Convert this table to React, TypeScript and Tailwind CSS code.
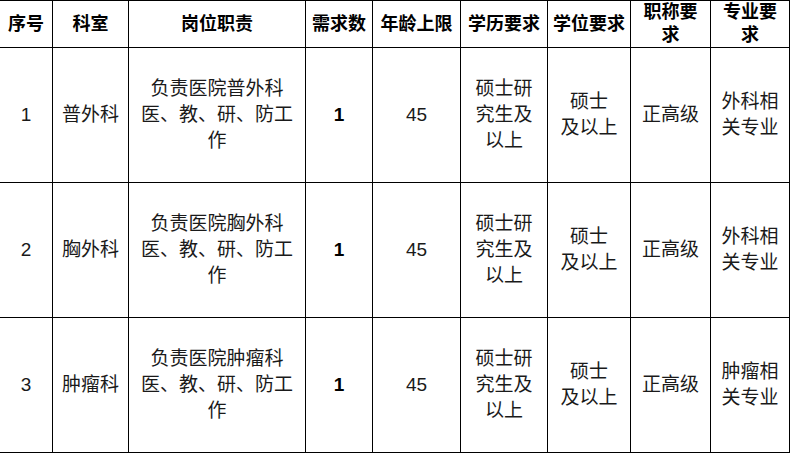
import React from 'react';

const cols = [53, 76, 177, 67, 88, 87, 83, 80, 79];

const rows = [
  { no: '1', dept: '普外科', major: ['外科相', '关专业'] },
  { no: '2', dept: '胸外科', major: ['外科相', '关专业'] },
  { no: '3', dept: '肿瘤科', major: ['肿瘤相', '关专业'] },
];

function Lines({ items }: { items: string[] }) {
  return (
    <>
      {items.map((t, i) => (
        <div key={i}>{t}</div>
      ))}
    </>
  );
}

export default function App() {
  const th = 'border border-black text-center align-middle font-bold text-[18px] leading-[23px] text-black p-0';
  const td = 'border border-black text-center align-middle text-[19px] leading-[26px] text-[#1a1a1a] p-0';
  return (
    <div
      className="w-[792px] h-[454px] bg-white overflow-hidden"
      style={{ fontFamily: '"Liberation Sans", "Noto Sans CJK SC", sans-serif' }}
    >
      <table className="table-fixed border-collapse ml-[-1px] w-[791px]">
        <colgroup>
          {cols.map((w, i) => (
            <col key={i} style={{ width: w }} />
          ))}
        </colgroup>
        <thead>
          <tr className="h-[43px]">
            <th className={th}>序号</th>
            <th className={th}>科室</th>
            <th className={th}>岗位职责</th>
            <th className={th}>需求数</th>
            <th className={th}>年龄上限</th>
            <th className={th}>学历要求</th>
            <th className={th}>学位要求</th>
            <th className={th}>
              <Lines items={['职称要', '求']} />
            </th>
            <th className={th}>
              <Lines items={['专业要', '求']} />
            </th>
          </tr>
        </thead>
        <tbody>
          {rows.map((r) => (
            <tr key={r.no} className="h-[135px]">
              <td className={td}>{r.no}</td>
              <td className={td}>{r.dept}</td>
              <td className={td}>
                <Lines items={[`负责医院${r.dept}`, '医、教、研、防工', '作']} />
              </td>
              <td className={`${td} font-bold text-black`}>1</td>
              <td className={td}>45</td>
              <td className={td}>
                <Lines items={['硕士研', '究生及', '以上']} />
              </td>
              <td className={td}>
                <Lines items={['硕士', '及以上']} />
              </td>
              <td className={td}>正高级</td>
              <td className={td}>
                <Lines items={r.major} />
              </td>
            </tr>
          ))}
        </tbody>
      </table>
    </div>
  );
}
